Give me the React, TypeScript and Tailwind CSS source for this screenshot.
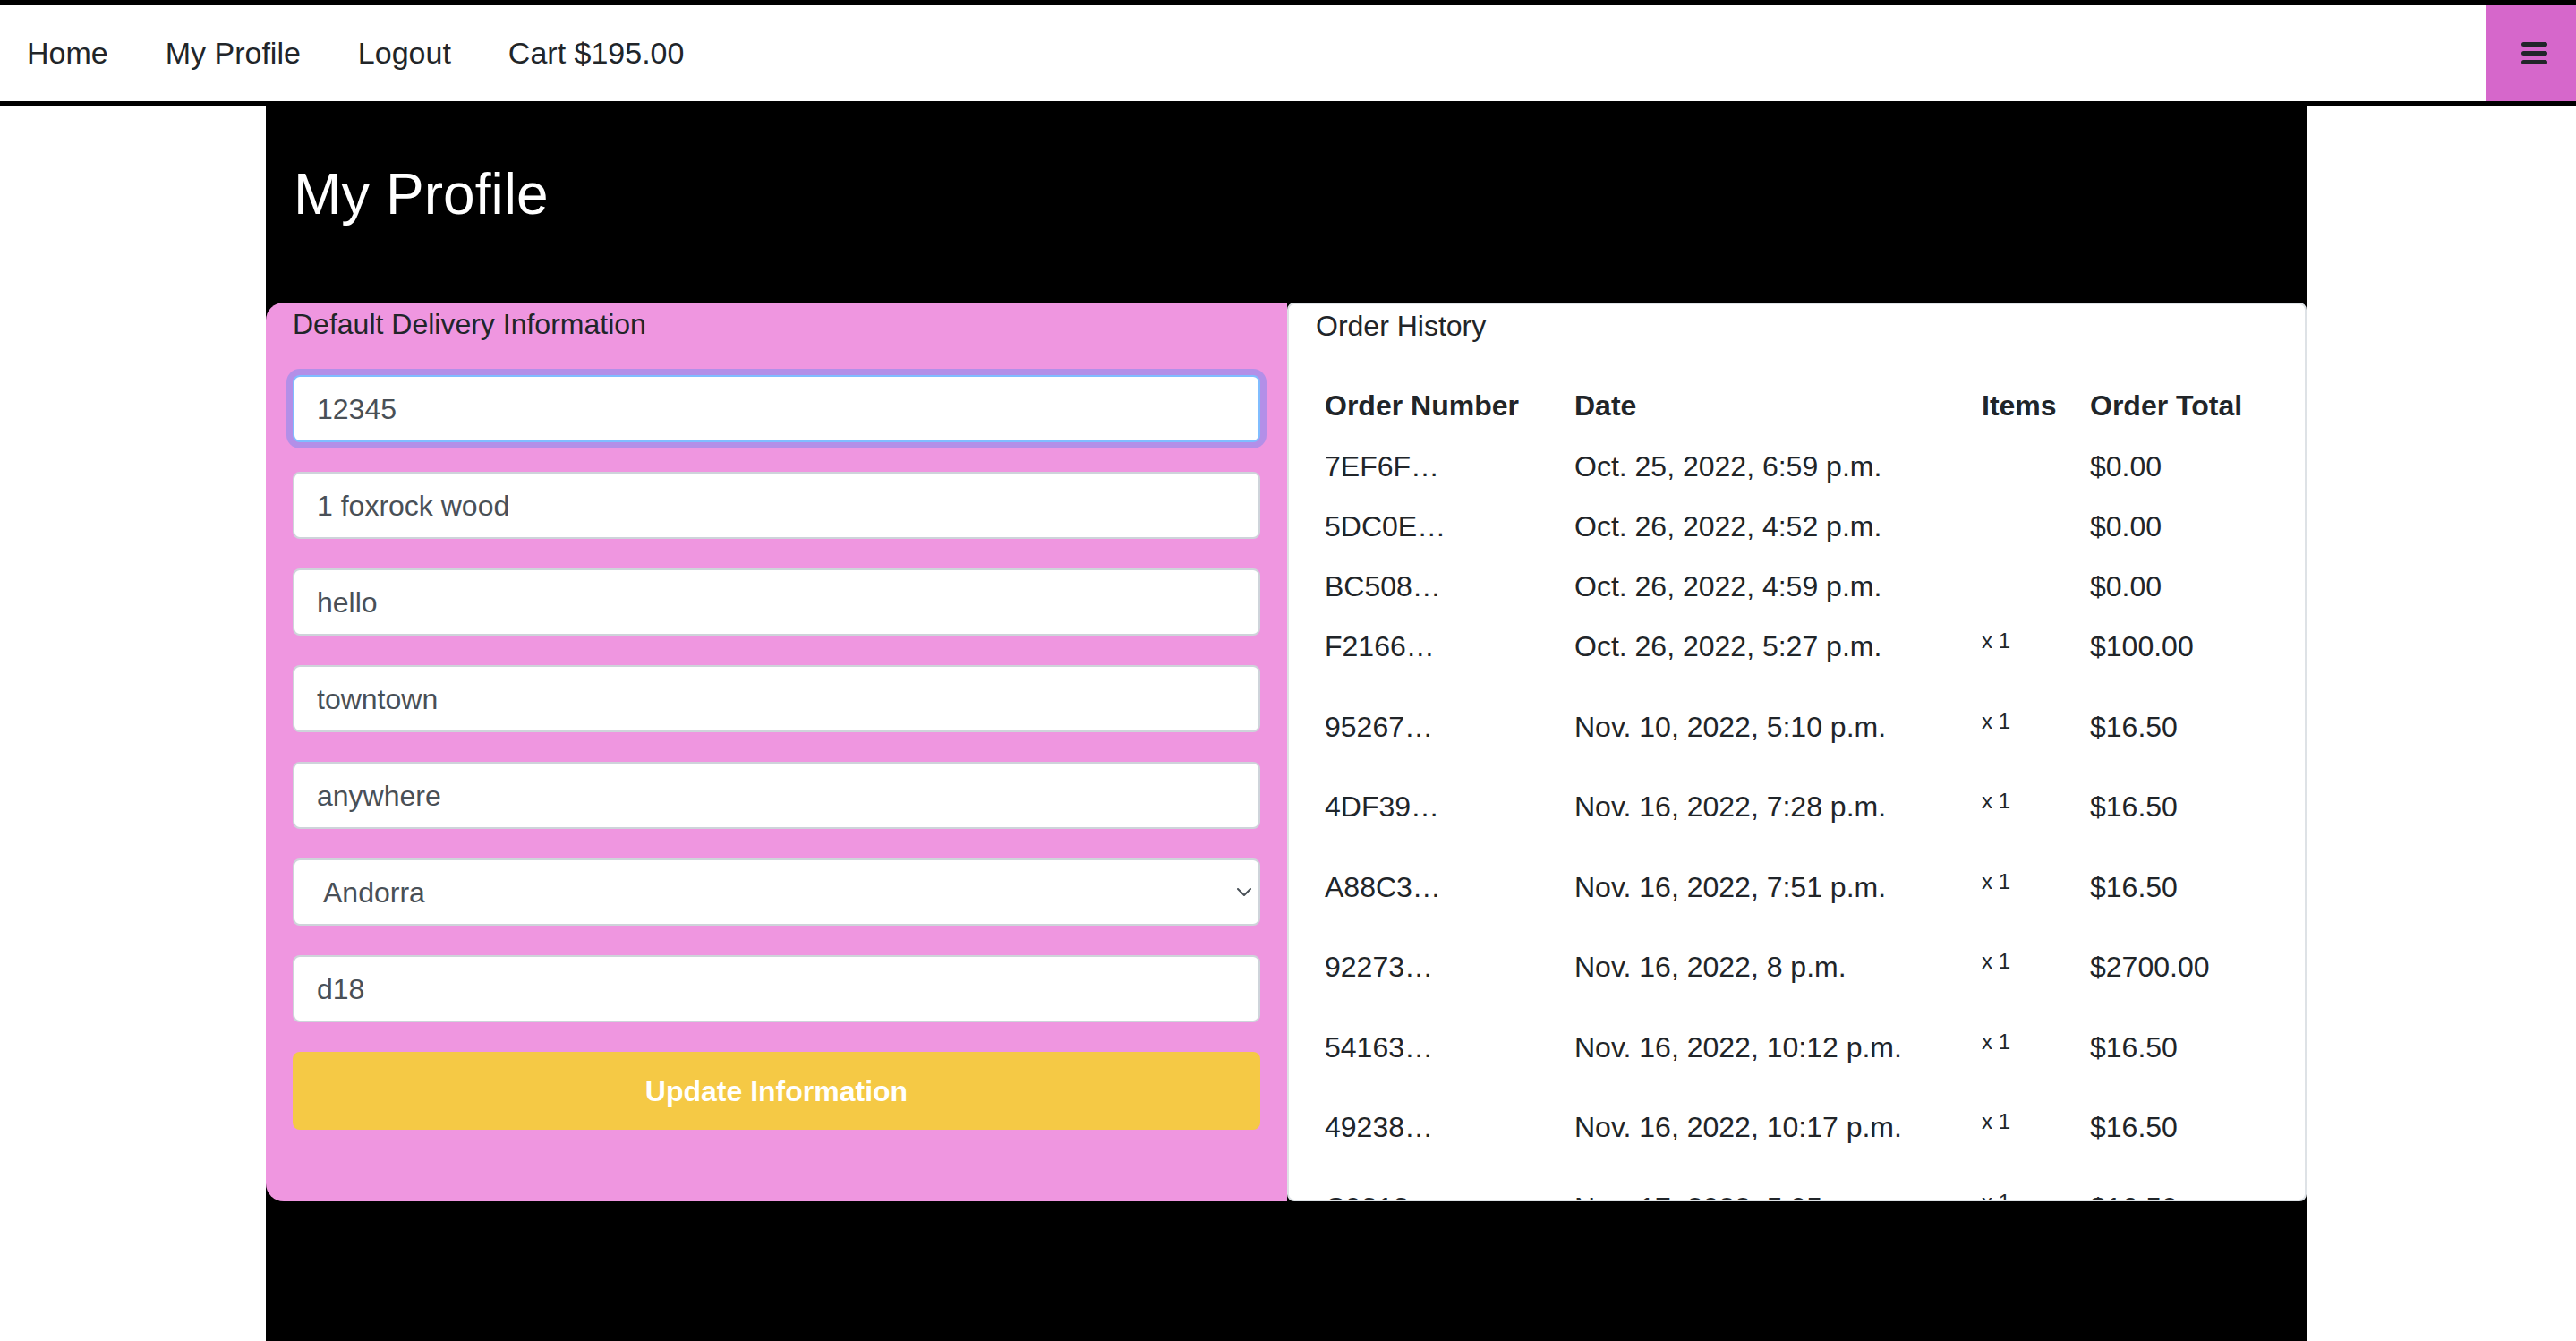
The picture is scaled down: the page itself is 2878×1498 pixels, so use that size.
import React from "react";

const orders = [
  { id: "7EF6F…", date: "Oct. 25, 2022, 6:59 p.m.", items: "", total: "$0.00" },
  { id: "5DC0E…", date: "Oct. 26, 2022, 4:52 p.m.", items: "", total: "$0.00" },
  { id: "BC508…", date: "Oct. 26, 2022, 4:59 p.m.", items: "", total: "$0.00" },
  { id: "F2166…", date: "Oct. 26, 2022, 5:27 p.m.", items: "x 1", total: "$100.00" },
  { id: "95267…", date: "Nov. 10, 2022, 5:10 p.m.", items: "x 1", total: "$16.50" },
  { id: "4DF39…", date: "Nov. 16, 2022, 7:28 p.m.", items: "x 1", total: "$16.50" },
  { id: "A88C3…", date: "Nov. 16, 2022, 7:51 p.m.", items: "x 1", total: "$16.50" },
  { id: "92273…", date: "Nov. 16, 2022, 8 p.m.", items: "x 1", total: "$2700.00" },
  { id: "54163…", date: "Nov. 16, 2022, 10:12 p.m.", items: "x 1", total: "$16.50" },
  { id: "49238…", date: "Nov. 16, 2022, 10:17 p.m.", items: "x 1", total: "$16.50" },
  { id: "C9313…", date: "Nov. 17, 2022, 5:05 p.m.", items: "x 1", total: "$16.50" },
  { id: "8A1D2…", date: "Nov. 17, 2022, 5:40 p.m.", items: "x 1", total: "$16.50" },
];

const fields = ["12345", "1 foxrock wood", "hello", "towntown", "anywhere"];

const Field = ({ value, focused }: { value: string; focused?: boolean }) => (
  <div
    className={
      focused
        ? "flex h-[75px] items-center rounded-[8px] border-2 border-[#80bdff] bg-white pl-[25px] text-[32px] leading-[48px] text-[#495057] shadow-[0_0_0_7px_rgba(0,123,255,0.25)]"
        : "flex h-[75px] items-center rounded-[8px] border-2 border-[#ced4da] bg-white pl-[25px] text-[32px] leading-[48px] text-[#495057]"
    }
  >
    {value}
  </div>
);

const App = () => {
  return (
    <div className="min-h-screen bg-white font-['Liberation_Sans',Arial,sans-serif] text-[#212529]">
      {/* Navbar */}
      <nav className="flex h-[118px] border-t-[6px] border-b-[5px] border-black bg-white">
        <div className="flex flex-1 items-center text-[34px]">
          <a className="pl-[30px] pr-[32px]">Home</a>
          <a className="px-[32px]">My Profile</a>
          <a className="px-[32px]">Logout</a>
          <a className="px-[32px]">Cart $195.00</a>
        </div>
        <button className="flex w-[101px] flex-col justify-center gap-[5px] bg-[#d667cb] pl-[40px]">
          <span className="block h-[5px] w-[29px] rounded-full bg-[#212529]" />
          <span className="block h-[5px] w-[29px] rounded-full bg-[#212529]" />
          <span className="block h-[5px] w-[29px] rounded-full bg-[#212529]" />
        </button>
      </nav>

      {/* Content */}
      <main className="ml-[297px] min-h-[1380px] w-[2280px] bg-black">
        <h1 className="pl-[31px] pt-[67px] pb-[89px] text-[64px] leading-none text-white">
          My Profile
        </h1>

        <div className="flex h-[1004px]">
          {/* Delivery info */}
          <section className="w-[1141px] shrink-0 rounded-l-[20px] bg-[#ef96e0] px-[30px]">
            <p className="text-[32px] leading-[48px]">Default Delivery Information</p>
            <div className="mt-[33px] flex flex-col gap-[33px]">
              {fields.map((f, i) => (
                <Field key={f} value={f} focused={i === 0} />
              ))}
              <div className="flex h-[75px] items-center justify-between rounded-[8px] border-2 border-[#ced4da] bg-white pl-[32px] pr-[8px] text-[32px] leading-[48px] text-[#495057]">
                <span>Andorra</span>
                <svg width="16" height="10" viewBox="0 0 16 10" fill="none">
                  <polyline
                    points="1,1 8,8 15,1"
                    stroke="#495057"
                    strokeWidth="2"
                    strokeLinecap="round"
                    strokeLinejoin="round"
                  />
                </svg>
              </div>
              <Field value="d18" />
              <button className="h-[87px] rounded-[8px] bg-[#f5c945] text-[32px] font-bold text-white">
                Update Information
              </button>
            </div>
          </section>

          {/* Order history */}
          <section className="flex-1 overflow-hidden rounded-[8px] border-2 border-[#dee2e6] bg-white px-[30px]">
            <p className="text-[32px] leading-[48px]">Order History</p>
            <div className="mt-[31px] text-[32px] leading-[48px]">
              <div className="grid h-[68px] grid-cols-[279px_455px_121px_222px] font-bold">
                <div className="px-[10px] pt-[10px]">Order Number</div>
                <div className="px-[10px] pt-[10px]">Date</div>
                <div className="px-[10px] pt-[10px]">Items</div>
                <div className="px-[10px] pt-[10px]">Order Total</div>
              </div>
              {orders.map((o) => (
                <div
                  key={o.id}
                  className={
                    o.items
                      ? "grid h-[89.5px] grid-cols-[279px_455px_121px_222px]"
                      : "grid h-[67px] grid-cols-[279px_455px_121px_222px]"
                  }
                >
                  <div className="px-[10px] pt-[10px]">{o.id}</div>
                  <div className="px-[10px] pt-[10px]">{o.date}</div>
                  <div className="px-[10px] pt-[12px] text-[24px] leading-[32px]">{o.items}</div>
                  <div className="px-[10px] pt-[10px]">{o.total}</div>
                </div>
              ))}
            </div>
          </section>
        </div>
      </main>
    </div>
  );
};

export default App;
